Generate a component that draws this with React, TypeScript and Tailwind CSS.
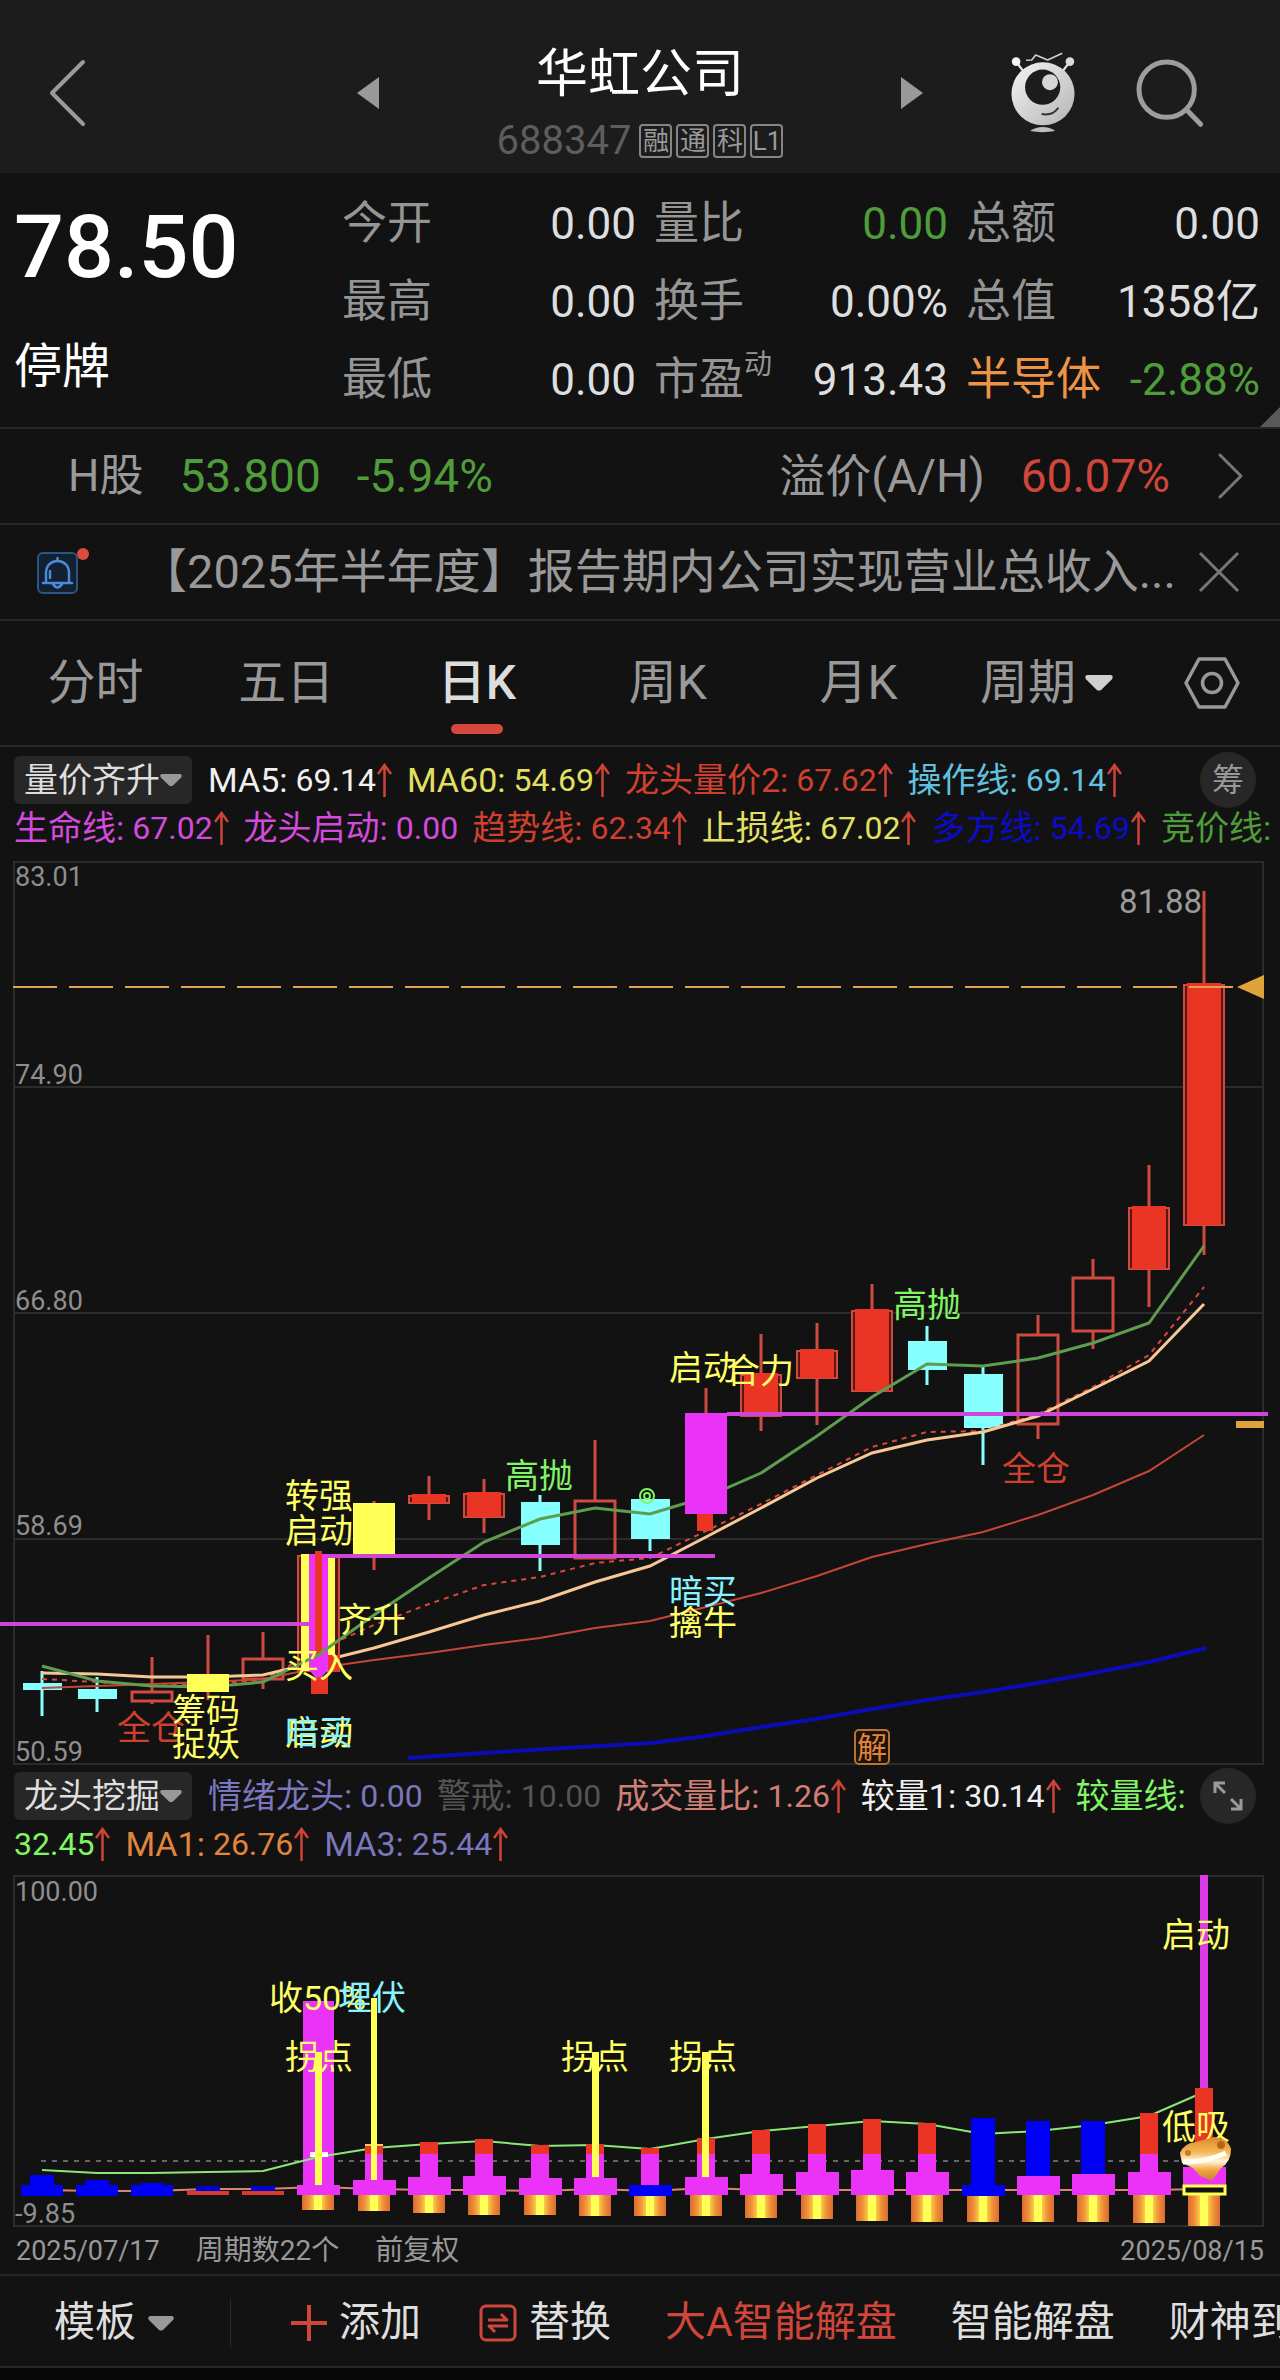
import { useState } from "react";
import type { ReactNode } from "react";

const FONT = "font-['Roboto','Noto_Sans_CJK_SC',sans-serif]";

/* ---------- icons ---------- */

function ChevronLeft() {
  return (
    <svg width="38" height="68" viewBox="0 0 38 68" fill="none" stroke="#9a9a9a" strokeWidth="4" strokeLinecap="round" strokeLinejoin="round">
      <path d="M35 3 L4 34 L35 65" />
    </svg>
  );
}

function ChevronRight() {
  return (
    <svg width="26" height="46" viewBox="0 0 26 46" fill="none" stroke="#777" strokeWidth="3" strokeLinecap="round" strokeLinejoin="round">
      <path d="M2 2 L23 23 L2 44" />
    </svg>
  );
}

function Robot() {
  return (
    <svg width="70" height="83" viewBox="90 60 210 250" fill="none">
      <defs>
        <linearGradient id="body" x1="0" y1="0" x2="1" y2="1">
          <stop offset="0" stopColor="#f4f4f4" />
          <stop offset="1" stopColor="#b4b4b4" />
        </linearGradient>
      </defs>
      <path d="M111 92 L132 120 M273 92 L252 120" stroke="#e2e2e2" strokeWidth="7" />
      <circle cx="111" cy="92" r="13" fill="#f4f4f4" />
      <circle cx="273" cy="92" r="13" fill="#dcdcdc" />
      <path d="M141 88 L158 87 L170 72 L206 87 L250 67" stroke="#cfcfcf" strokeWidth="5" strokeLinejoin="round" />
      <circle cx="192" cy="189" r="95" fill="url(#body)" />
      <circle cx="191" cy="169" r="53" fill="#1c1c1c" />
      <circle cx="213" cy="154" r="24" fill="#d6d6d6" />
      <path d="M188 250 Q222 256 238 231" stroke="#333" strokeWidth="6" />
      <path d="M153 301 Q170 289 191 289 Q212 289 229 301 Q191 308 153 301 Z" fill="#bdbdbd" />
    </svg>
  );
}

function Magnifier() {
  return (
    <svg width="70" height="70" viewBox="465 80 210 210" fill="none" stroke="#9d9d9d" strokeWidth="15" strokeLinecap="round">
      <circle cx="560" cy="175" r="83" />
      <path d="M621 237 L662 279" />
    </svg>
  );
}

function Bell() {
  return (
    <svg width="54" height="50" viewBox="0 0 54 50" fill="none">
      <rect x="2" y="6" width="39" height="40" rx="5" fill="#13202f" stroke="#2b5587" strokeWidth="2" />
      <path d="M7 36 H36 M10 36 V26 C10 10 33 10 33 26 V36 M14 31 V24 M21.500 14 V11 M17 37 Q21.500 44 26 37" stroke="#4a8ad8" strokeWidth="2.500" strokeLinecap="round" />
      <circle cx="47" cy="7" r="6" fill="#dc4b40" />
    </svg>
  );
}

function Close() {
  return (
    <svg width="42" height="42" viewBox="0 0 42 42" stroke="#777" strokeWidth="3">
      <path d="M2 2 L40 40 M40 2 L2 40" />
    </svg>
  );
}

function HexSettings() {
  return (
    <svg width="56" height="52" viewBox="0 0 56 52" fill="none" stroke="#999" strokeWidth="3.500" strokeLinejoin="round">
      <path d="M15 2 H41 L54 26 L41 50 H15 L2 26 Z" />
      <circle cx="28" cy="26" r="9.500" />
    </svg>
  );
}

function Caret({ color = "#999", size = 22 }: { color?: string; size?: number }) {
  return (
    <svg width={size} height={(size * 15) / 26} viewBox="0 0 26 15" fill={color} className="shrink-0">
      <path d="M2 0 H24 Q27 1 25 4 L15 14 Q13 15 11 14 L1 4 Q-1 1 2 0 Z" />
    </svg>
  );
}

function UpArrow() {
  return (
    <svg width="17" height="34" viewBox="0 0 17 34" fill="none" stroke="#cf4337" strokeWidth="2.500" className="shrink-0">
      <path d="M8.500 34 V2 M2 11 L8.500 2 L15 11" />
    </svg>
  );
}

function Expand() {
  return (
    <svg width="30" height="30" viewBox="0 0 30 30" fill="none" stroke="#9a9a9a" strokeWidth="3">
      <path d="M2 12 V2 H12 M2 2 L12 12 M28 18 V28 H18 M28 28 L18 18" />
    </svg>
  );
}

function Swap() {
  return (
    <svg width="38" height="38" viewBox="0 0 38 38" fill="none" stroke="#d0463b" strokeWidth="3" strokeLinejoin="round">
      <rect x="2" y="2" width="34" height="34" rx="5" />
      <path d="M9 16 H28 L22 10 M29 22 H10 L16 28" />
    </svg>
  );
}

/* ---------- small parts ---------- */

function Picker({ label, text, className, caret, caretSize }: { label: string; text: string; className: string; caret?: string; caretSize?: number }) {
  return (
    <label className="flex shrink-0 cursor-pointer items-center">
      <select aria-label={label} className={`appearance-none bg-transparent outline-none ${className}`}>
        <option>{text}</option>
      </select>
      <Caret color={caret} size={caretSize} />
    </label>
  );
}

function Reading({ name, value, up, className }: { name?: string; value?: string; up?: boolean; className: string }) {
  return (
    <span className={`flex shrink-0 items-center gap-2 whitespace-nowrap text-[34px] leading-[48px] ${className}`}>
      {name}
      {value && (
        <span className="flex items-center text-[32px]">
          {value}
          {up && <UpArrow />}
        </span>
      )}
    </span>
  );
}

function Stat({ label, sup, value, valueClass = "text-[#dedede]", labelClass = "text-[#959595]" }: { label: string; sup?: string; value: string; valueClass?: string; labelClass?: string }) {
  return (
    <div className="flex items-center justify-between whitespace-nowrap">
      <dt className={`flex text-[45px] leading-[78px] ${labelClass}`}>
        {label}
        {sup && <sup className="top-0 pt-1 text-[28px] leading-10">{sup}</sup>}
      </dt>
      <dd className={`text-[44px] leading-[72px] ${valueClass}`}>{value}</dd>
    </div>
  );
}

function Badge({ children }: { children: ReactNode }) {
  return (
    <span className="flex h-[34px] w-[33px] items-center justify-center rounded border-2 border-[#858585] text-[26px] leading-none text-[#999]">
      {children}
    </span>
  );
}

/* ---------- main chart ---------- */

const cx = (i: number) => Math.round(41.6 + i * 55.35);
const points = (ys: number[]) => ys.map((y, i) => `${cx(i)},${y}`).join(" ");

type Kind = "cyan" | "hollow" | "red" | "yellow" | "magenta";
type Candle = { i: number; kind: Kind; top: number; bottom: number; high: number; low: number };

const candles: Candle[] = [
  { i: 0, kind: "cyan", top: 1683, bottom: 1690, high: 1671, low: 1716 },
  { i: 1, kind: "cyan", top: 1689, bottom: 1699, high: 1677, low: 1712 },
  { i: 2, kind: "hollow", top: 1692, bottom: 1701, high: 1657, low: 1704 },
  { i: 3, kind: "yellow", top: 1674, bottom: 1692, high: 1635, low: 1700 },
  { i: 4, kind: "hollow", top: 1659, bottom: 1679, high: 1632, low: 1689 },
  { i: 6, kind: "yellow", top: 1503, bottom: 1558, high: 1501, low: 1570 },
  { i: 7, kind: "red", top: 1496, bottom: 1503, high: 1476, low: 1520 },
  { i: 8, kind: "red", top: 1494, bottom: 1517, high: 1479, low: 1533 },
  { i: 9, kind: "cyan", top: 1502, bottom: 1545, high: 1495, low: 1571 },
  { i: 10, kind: "hollow", top: 1501, bottom: 1558, high: 1440, low: 1558 },
  { i: 11, kind: "cyan", top: 1499, bottom: 1539, high: 1499, low: 1551 },
  { i: 12, kind: "magenta", top: 1413, bottom: 1514, high: 1388, low: 1514 },
  { i: 13, kind: "red", top: 1375, bottom: 1416, high: 1334, low: 1431 },
  { i: 14, kind: "red", top: 1351, bottom: 1378, high: 1323, low: 1425 },
  { i: 15, kind: "red", top: 1311, bottom: 1391, high: 1284, low: 1391 },
  { i: 16, kind: "cyan", top: 1341, bottom: 1370, high: 1326, low: 1385 },
  { i: 17, kind: "cyan", top: 1374, bottom: 1428, high: 1367, low: 1465 },
  { i: 18, kind: "hollow", top: 1335, bottom: 1424, high: 1315, low: 1439 },
  { i: 19, kind: "hollow", top: 1278, bottom: 1331, high: 1259, low: 1349 },
  { i: 20, kind: "red", top: 1208, bottom: 1269, high: 1165, low: 1307 },
  { i: 21, kind: "red", top: 985, bottom: 1225, high: 891, low: 1255 },
];

const ma5 = [1666, 1681, 1686, 1687, 1682, 1655, 1615, 1578, 1542, 1519, 1508, 1514, 1497, 1473, 1436, 1397, 1364, 1366, 1358, 1343, 1323, 1246];
const life = [1673, 1674, 1677, 1677, 1675, 1662, 1648, 1632, 1615, 1601, 1582, 1566, 1537, 1508, 1478, 1453, 1440, 1432, 1416, 1389, 1361, 1304];
const dotted = [1679, 1682, 1686, 1684, 1680, 1650, 1625, 1604, 1585, 1577, 1563, 1558, 1531, 1504, 1475, 1447, 1432, 1431, 1414, 1387, 1355, 1287];
const trend = [1688, 1686, 1684, 1682, 1679, 1668, 1660, 1653, 1645, 1638, 1628, 1621, 1607, 1593, 1576, 1557, 1544, 1532, 1515, 1495, 1471, 1435];

const kindColor: Record<Kind, string> = {
  cyan: "#86ffff",
  hollow: "#cf4a40",
  red: "#ea3424",
  yellow: "#ffff55",
  magenta: "#ea33f7",
};

function CandleShape({ c }: { c: Candle }) {
  const x = cx(c.i);
  const wick = c.kind === "cyan" ? "#86ffff" : "#cf4a40";
  const h = c.bottom - c.top;
  return (
    <g>
      <path d={`M${x} ${c.high} V${c.top} M${x} ${c.bottom} V${c.low}`} stroke={wick} strokeWidth="3" />
      {c.kind === "cyan" && <rect x={x - 19} y={c.top} width="39" height={h} fill={kindColor.cyan} />}
      {c.kind === "hollow" && <rect x={x - 20} y={c.top} width="40" height={h} fill="none" stroke={wick} strokeWidth="3" />}
      {c.kind === "red" && (
        <>
          <rect x={x - 20} y={c.top} width="40" height={h} fill="#5a1712" stroke={wick} strokeWidth="2" />
          <rect x={x - 17} y={c.top - 2} width="34" height={h + 2} fill={kindColor.red} />
        </>
      )}
      {(c.kind === "yellow" || c.kind === "magenta") && <rect x={x - 21} y={c.top} width="42" height={h} fill={kindColor[c.kind]} />}
    </g>
  );
}

type Mark = { x: number; y: number; text: string; color: string };

const Y = "#ffff66";
const G = "#82f567";
const R = "#d0402f";
const C = "#86f3ff";

const marks: Mark[] = [
  { x: 117, y: 1740, text: "全仓", color: R },
  { x: 172, y: 1723, text: "筹码", color: Y },
  { x: 172, y: 1756, text: "捉妖", color: Y },
  { x: 285, y: 1508, text: "转强", color: Y },
  { x: 285, y: 1543, text: "启动", color: Y },
  { x: 338, y: 1632, text: "齐升", color: Y },
  { x: 285, y: 1678, text: "买入", color: Y },
  { x: 285, y: 1745, text: "启动", color: Y },
  { x: 285, y: 1745, text: "暗买", color: C },
  { x: 505, y: 1488, text: "高抛", color: G },
  { x: 893, y: 1317, text: "高抛", color: G },
  { x: 669, y: 1380, text: "启动", color: Y },
  { x: 726, y: 1383, text: "合力", color: Y },
  { x: 1002, y: 1481, text: "全仓", color: R },
  { x: 669, y: 1604, text: "暗买", color: C },
  { x: 669, y: 1635, text: "擒牛", color: Y },
];

function MainChart() {
  return (
    <svg viewBox="0 852 1280 914" className="block h-auto w-full" role="img" aria-label="日K线图">
      <g stroke="#2b2b2b" strokeWidth="2" fill="none">
        <rect x="14" y="862" width="1249" height="902" />
        <path d="M14 1087 H1263 M14 1313 H1263 M14 1539 H1263" />
      </g>
      <g fontSize="27" fill="#8e8e8e">
        <text x="15" y="886">83.01</text>
        <text x="15" y="1084">74.90</text>
        <text x="15" y="1310">66.80</text>
        <text x="15" y="1535">58.69</text>
        <text x="15" y="1761">50.59</text>
      </g>
      <text x="1202" y="913" fontSize="33" textAnchor="end" fill="#9a9a9a">81.88</text>

      {candles.map((c) => (
        <CandleShape key={c.i} c={c} />
      ))}

      <g fill="none">
        <polyline points={points(trend)} stroke="#c4453a" strokeWidth="2" />
        <polyline points={points(dotted)} stroke="#d9483c" strokeWidth="2" strokeDasharray="5 5" />
        <polyline points={points(life)} stroke="#f7c896" strokeWidth="3" />
      </g>

      <g>
        <rect x="298" y="1556" width="41" height="115" fill="#5a1712" stroke="#cf4a40" strokeWidth="2" />
        <rect x="301" y="1554" width="34" height="117" fill="#ffff55" />
        <rect x="328" y="1655" width="11" height="17" fill="#ea3424" />
        <path d="M309 1554 H328 V1670 L322 1677 H315 L309 1670 Z" fill="#ea33f7" />
        <rect x="315" y="1551" width="7" height="104" fill="#ea3424" />
        <rect x="311" y="1677" width="17" height="17" fill="#ea3424" />
        <rect x="697" y="1514" width="16" height="17" fill="#ea3424" />
      </g>

      <g fill="none">
        <polyline points={points(ma5)} stroke="#5e9c50" strokeWidth="3" />
        <path d="M408 1758 L530 1750 L651 1743 L706 1736 L761 1727 L816 1719 L872 1709 L927 1700 L983 1692 L1038 1683 L1093 1673 L1149 1662 L1206 1648" stroke="#0c0cb4" strokeWidth="4" />
        <path d="M0 1624 H309 M328 1556 H715 M727 1414 H1268" stroke="#cd46d8" strokeWidth="4" />
        <path d="M13 987 H1236" stroke="#dfa252" strokeWidth="2" strokeDasharray="44 12" />
      </g>
      <rect x={cx(12) - 21} y="1413" width="42" height="101" fill="#ea33f7" />
      <rect x={cx(3) - 21} y="1674" width="42" height="18" fill="#ffff55" />
      <path d="M1237 987 L1264 975 V999 Z" fill="#e0a23b" />
      <rect x="1236" y="1421" width="28" height="7" fill="#e0a23b" />
      <circle cx="647" cy="1496" r="7" fill="none" stroke="#82f567" strokeWidth="2" />
      <circle cx="647" cy="1496" r="3" fill="none" stroke="#82f567" strokeWidth="2" />

      <g fontSize="34">
        {marks.map((m, k) => (
          <text key={k} x={m.x} y={m.y} fill={m.color}>
            {m.text}
          </text>
        ))}
      </g>
      <rect x="855" y="1730" width="34" height="34" rx="4" fill="#1d130b" stroke="#b87332" strokeWidth="2" />
      <text x="872" y="1758" fontSize="30" textAnchor="middle" fill="#e0853d">解</text>
    </svg>
  );
}

/* ---------- indicator chart ---------- */

type Bar = { top: number; base: number; low: number; blue?: boolean; blueBase?: boolean };

const bars: Record<number, Bar> = {
  6: { top: 2144, base: 2180, low: 2211 },
  7: { top: 2142, base: 2177, low: 2213 },
  8: { top: 2139, base: 2176, low: 2215 },
  9: { top: 2145, base: 2178, low: 2215 },
  10: { top: 2144, base: 2178, low: 2216 },
  11: { top: 2148, base: 2185, low: 2216, blueBase: true },
  12: { top: 2138, base: 2177, low: 2216 },
  13: { top: 2130, base: 2174, low: 2218 },
  14: { top: 2124, base: 2172, low: 2219 },
  15: { top: 2119, base: 2170, low: 2221 },
  16: { top: 2123, base: 2172, low: 2222 },
  17: { top: 2118, base: 2185, low: 2222, blue: true, blueBase: true },
  18: { top: 2121, base: 2176, low: 2222, blue: true },
  19: { top: 2121, base: 2174, low: 2222, blue: true },
  20: { top: 2113, base: 2172, low: 2223 },
  21: { top: 2088, base: 2167, low: 2226 },
};

const compare = [2170, 2173, 2173, 2172, 2171, 2157, 2148, 2144, 2141, 2146, 2145, 2149, 2139, 2131, 2126, 2121, 2124, 2134, 2131, 2125, 2116, 2092];
const ratio = [2190, 2191, 2191, 2189, 2189, 2187, 2189, 2190, 2190, 2191, 2189, 2191, 2188, 2190, 2190, 2190, 2190, 2190, 2190, 2190, 2190, 2189];

function Gold({ x, low }: { x: number; low: number }) {
  return <rect x={x - 16} y="2195" width="32" height={low - 2195} fill="url(#gold)" />;
}

function IndicatorChart() {
  return (
    <svg viewBox="0 1870 1280 358" className="block h-auto w-full" role="img" aria-label="龙头挖掘指标图">
      <defs>
        <linearGradient id="gold">
          <stop offset="0" stopColor="#dc6b2f" />
          <stop offset="0.2" stopColor="#ee8f38" />
          <stop offset="0.36" stopColor="#f9c844" />
          <stop offset="0.37" stopColor="#ffff55" />
          <stop offset="0.63" stopColor="#ffff55" />
          <stop offset="0.64" stopColor="#f9c844" />
          <stop offset="0.8" stopColor="#ee8f38" />
          <stop offset="1" stopColor="#dc6b2f" />
        </linearGradient>
        <linearGradient id="ingot" x1="0" y1="0" x2="0" y2="1">
          <stop offset="0" stopColor="#d88a2c" />
          <stop offset="0.35" stopColor="#f5b95a" />
          <stop offset="0.55" stopColor="#fff6dc" />
          <stop offset="0.75" stopColor="#f0a63e" />
          <stop offset="1" stopColor="#cf7a3a" />
        </linearGradient>
      </defs>
      <rect x="14" y="1876" width="1249" height="350" fill="none" stroke="#2b2b2b" strokeWidth="2" />
      <g fontSize="27" fill="#8e8e8e">
        <text x="15" y="1901">100.00</text>
        <text x="15" y="2223">-9.85</text>
      </g>
      <path d="M41 2161 H1204" stroke="#666" strokeWidth="2" strokeDasharray="5 6" />
      <polyline points={points(ratio)} fill="none" stroke="#d98277" strokeWidth="2" />

      <rect x="303" y="2001" width="31" height="190" fill="#ea33f7" />
      <polyline points={points(compare)} fill="none" stroke="#8be878" strokeWidth="2" />

      {[2175, 2180, 2183].map((y, i) => (
        <g key={i} fill="#0000f5">
          <rect x={cx(i) - 21} y="2185" width="42" height="11" />
          <rect x={cx(i) - 12} y={y} width="24" height="12" />
        </g>
      ))}
      {[3, 4].map((i) => (
        <g key={i}>
          <rect x={cx(i) - 21} y="2191" width="42" height="4" fill="#d93a2c" />
          <rect x={cx(i) - 12} y="2186" width="24" height="5" fill="#0000d0" />
        </g>
      ))}

      <rect x="297" y="2185" width="43" height="10" fill="#ea33f7" />
      <Gold x={318} low={2210} />

      {Object.entries(bars).map(([k, b]) => {
        const x = cx(Number(k));
        return (
          <g key={k}>
            {b.blue ? (
              <rect x={x - 12} y={b.top} width="24" height={b.base - b.top} fill="#0000f5" />
            ) : (
              <>
                <rect x={x - 9} y={b.top} width="18" height={b.base - b.top} fill="#ea3424" />
                <rect x={x - 9} y="2154" width="18" height={b.base - 2154} fill="#ea33f7" />
              </>
            )}
            <Gold x={x} low={b.low} />
            <rect x={x - 21} y={b.base} width="43" height={(b.blueBase ? 2196 : 2195) - b.base} fill={b.blueBase ? "#0000f5" : "#ea33f7"} />
          </g>
        );
      })}

      <g fontSize="34" fill={Y}>
        <text x="269" y="2010">收50%</text>
        <text x="338" y="2010" fill={C}>埋伏</text>
        <text x="285" y="2069">拐点</text>
        <text x="561" y="2069">拐点</text>
        <text x="669" y="2069">拐点</text>
      </g>

      <rect x="310" y="2152" width="18" height="5" fill="#fff" />
      <rect x={cx(6) - 9} y="2144" width="18" height="2" fill="#f7c864" />
      <g fill="#ffff55">
        <rect x="315" y="2052" width="7" height="133" />
        <rect x="371" y="1998" width="6" height="182" />
        <rect x="592" y="2052" width="7" height="125" />
        <rect x="702" y="2052" width="7" height="125" />
      </g>

      <rect x="1200" y="1875" width="8" height="213" fill="#dc3ce8" />
      <rect x="1195" y="2088" width="18" height="60" fill="#ea3424" />
      <rect x="1184" y="2186" width="41" height="8" fill="#121212" stroke="#ffff55" strokeWidth="3" />
      <g fontSize="34" fill={Y}>
        <text x="1162" y="1947">启动</text>
        <text x="1162" y="2139">低吸</text>
      </g>
      <path d="M1180 2153 Q1184 2143 1196 2142 L1214 2137 Q1228 2138 1231 2149 Q1231 2162 1221 2168 L1212 2181 L1200 2176 L1193 2168 L1182 2163 Z" fill="url(#ingot)" />
      <path d="M1183 2162 Q1206 2162 1226 2153" stroke="#fffdf0" strokeWidth="5" fill="none" />
      <circle cx="1221" cy="2145" r="4" fill="#b3661b" />
      <circle cx="1188" cy="2153" r="3" fill="#c97c28" />
    </svg>
  );
}

/* ---------- page ---------- */

const tabs = ["分时", "五日", "日K", "周K", "月K"];

export default function App() {
  const [tab, setTab] = useState("日K");

  return (
    <div className={`min-h-screen overflow-hidden bg-[#080808] text-[#dedede] ${FONT}`}>
      <div className="bg-[#121212]">
        <header className="grid h-[173px] grid-cols-[1fr_566px_1fr] items-center bg-[#1c1c1c] pt-3">
          <button aria-label="返回" className="justify-self-start pl-12">
            <ChevronLeft />
          </button>
          <div className="flex items-center justify-between">
            <button aria-label="上一只">
              <svg width="22" height="32" viewBox="0 0 22 32" fill="#999"><path d="M22 0 V32 L0 16 Z" /></svg>
            </button>
            <div className="flex flex-col items-center pt-5">
              <h1 className="text-[52px] leading-[76px] text-white">华虹公司</h1>
              <div className="flex items-center gap-1">
                <span className="pr-1 text-[40px] leading-[56px] text-[#5d5d5d]">688347</span>
                <Badge>融</Badge>
                <Badge>通</Badge>
                <Badge>科</Badge>
                <Badge>L1</Badge>
              </div>
            </div>
            <button aria-label="下一只">
              <svg width="22" height="32" viewBox="0 0 22 32" fill="#999"><path d="M0 0 V32 L22 16 Z" /></svg>
            </button>
          </div>
          <div className="flex items-center justify-end gap-14 pr-[75px]">
            <button aria-label="智能助手"><Robot /></button>
            <button aria-label="搜索"><Magnifier /></button>
          </div>
        </header>

        <section className="relative flex h-64 border-b-2 border-[#262626] pl-[14px] pr-5">
          <div className="w-[328px] shrink-0 pt-6">
            <div className="text-[88px] font-medium leading-[100px] text-white">78.50</div>
            <div className="pt-[34px] text-[48px] leading-[72px] text-white">停牌</div>
          </div>
          <dl className="grid flex-1 auto-rows-[78px] grid-cols-3 gap-x-[18px] pt-3">
            <Stat label="今开" value="0.00" />
            <Stat label="量比" value="0.00" valueClass="text-[#4f9d3a]" />
            <Stat label="总额" value="0.00" />
            <Stat label="最高" value="0.00" />
            <Stat label="换手" value="0.00%" />
            <Stat label="总值" value="1358亿" />
            <Stat label="最低" value="0.00" />
            <Stat label="市盈" sup="动" value="913.43" />
            <Stat label="半导体" labelClass="text-[#ee9447]" value="-2.88%" valueClass="text-[#4f9d3a]" />
          </dl>
          <svg className="absolute bottom-0 right-0" width="20" height="20" viewBox="0 0 20 20" fill="#5a5a5a"><path d="M20 0 V20 H0 Z" /></svg>
        </section>

        <a href="#h-share" className="flex h-24 items-center border-b-2 border-[#262626] pl-[68px] pr-9 text-[46px]">
          <span className="text-[44px] text-[#999]">H股</span>
          <span className="pl-9 text-[#4f9d3a]">53.800</span>
          <span className="pl-9 text-[#4f9d3a]">-5.94%</span>
          <span className="ml-auto text-[#999]">溢价(A/H)</span>
          <span className="pl-9 pr-12 text-[#d0463b]">60.07%</span>
          <ChevronRight />
        </a>

        <div className="flex h-24 items-center border-b-2 border-[#262626] pl-9 pr-10">
          <Bell />
          <a href="#notice" className="ml-[50px] flex-1 whitespace-nowrap text-[47px] text-[#999]">
            【2025年半年度】报告期内公司实现营业总收入...
          </a>
          <button aria-label="关闭" className="shrink-0"><Close /></button>
        </div>

        <nav className="grid h-[126px] grid-cols-[repeat(5,minmax(0,1fr))_326px] items-center border-b-2 border-[#262626] text-[48px]">
          {tabs.map((t) => (
            <button
              key={t}
              onClick={() => setTab(t)}
              aria-pressed={t === tab}
              className={t === tab ? "relative font-medium leading-[102px] text-[#dcdcdc]" : "relative leading-[102px] text-[#999]"}
            >
              {t}
              {t === tab && <span className="absolute inset-x-0 bottom-0 mx-auto h-[10px] w-[52px] rounded-full bg-[#d8473c]" />}
            </button>
          ))}
          <div className="flex items-center justify-between pl-[26px] pr-10">
            <Picker label="周期" text="周期" className="pr-2 text-[#999]" caret="#d0d0d0" caretSize={28} />
            <button aria-label="设置"><HexSettings /></button>
          </div>
        </nav>

        <section className="h-[105px] overflow-hidden pl-[14px] pt-[9px]">
          <div className="flex items-center">
            <div className="mr-4 flex h-12 w-[178px] shrink-0 items-center justify-center rounded-md bg-[#272727]">
              <Picker label="主图指标" text="量价齐升" className="text-[34px] leading-[48px] text-[#dedede]" />
            </div>
            <div className="flex gap-[14px]">
              <Reading name="MA5:" value="69.14" up className="text-[#f0f0f0]" />
              <Reading name="MA60:" value="54.69" up className="text-[#e2e062]" />
              <Reading name="龙头量价2:" value="67.62" up className="text-[#d0402f]" />
              <Reading name="操作线:" value="69.14" up className="text-[#62c0de]" />
            </div>
            <button className="-my-1 ml-auto mr-6 h-14 w-14 shrink-0 rounded-full bg-[#272727] text-[32px] leading-none text-[#999]">筹</button>
          </div>
          <div className="flex gap-[14px]">
            <Reading name="生命线:" value="67.02" up className="text-[#d24bdc]" />
            <Reading name="龙头启动:" value="0.00" className="text-[#d24bdc]" />
            <Reading name="趋势线:" value="62.34" up className="text-[#d0402f]" />
            <Reading name="止损线:" value="67.02" up className="text-[#e2e062]" />
            <Reading name="多方线:" value="54.69" up className="text-[#0c0cc8]" />
            <Reading name="竞价线:" className="text-[#4f9d3a]" />
          </div>
        </section>

        <MainChart />

        <section className="h-[104px] overflow-hidden pl-[14px] pt-[6px]">
          <div className="flex items-center">
            <div className="mr-4 flex h-12 w-[178px] shrink-0 items-center justify-center rounded-md bg-[#272727]">
              <Picker label="副图指标" text="龙头挖掘" className="text-[34px] leading-[48px] text-[#dedede]" />
            </div>
            <div className="flex gap-[14px]">
              <Reading name="情绪龙头:" value="0.00" className="text-[#7b77bd]" />
              <Reading name="警戒:" value="10.00" className="text-[#555]" />
              <Reading name="成交量比:" value="1.26" up className="text-[#d07f76]" />
              <Reading name="较量1:" value="30.14" up className="text-[#f0f0f0]" />
              <Reading name="较量线:" className="text-[#82f567]" />
            </div>
            <button aria-label="全屏" className="-my-1 ml-auto mr-6 flex h-14 w-14 shrink-0 items-center justify-center rounded-full bg-[#272727]">
              <Expand />
            </button>
          </div>
          <div className="flex gap-[14px]">
            <Reading value="32.45" up className="text-[#82f567]" />
            <Reading name="MA1:" value="26.76" up className="text-[#e0853d]" />
            <Reading name="MA3:" value="25.44" up className="text-[#7b77bd]" />
          </div>
        </section>

        <IndicatorChart />

        <div className="flex h-12 items-center gap-9 border-b-2 border-[#262626] px-4 text-[28px] text-[#999]">
          <time className="text-[27px]">2025/07/17</time>
          <span>周期数22个</span>
          <span>前复权</span>
          <time className="ml-auto text-[27px]">2025/08/15</time>
        </div>

        <footer className="flex h-[92px] items-center overflow-hidden whitespace-nowrap border-b-2 border-[#262626] pl-[54px] pt-1 text-[41px]">
          <Picker label="模板" text="模板" className="pr-3 text-[#dedede]" caretSize={26} />
          <span className="ml-14 mr-[60px] h-12 w-px shrink-0 bg-[#2a2a2a]" />
          <button className="flex shrink-0 items-center gap-3">
            <svg width="36" height="36" viewBox="0 0 36 36" stroke="#d0463b" strokeWidth="4"><path d="M18 0 V36 M0 18 H36" /></svg>
            添加
          </button>
          <button className="ml-[58px] flex shrink-0 items-center gap-3">
            <Swap />
            替换
          </button>
          <button className="ml-[54px] shrink-0 text-[#d0463b]">大A智能解盘</button>
          <button className="ml-[54px] shrink-0">智能解盘</button>
          <button className="ml-[54px] shrink-0">财神到</button>
        </footer>
      </div>
    </div>
  );
}
